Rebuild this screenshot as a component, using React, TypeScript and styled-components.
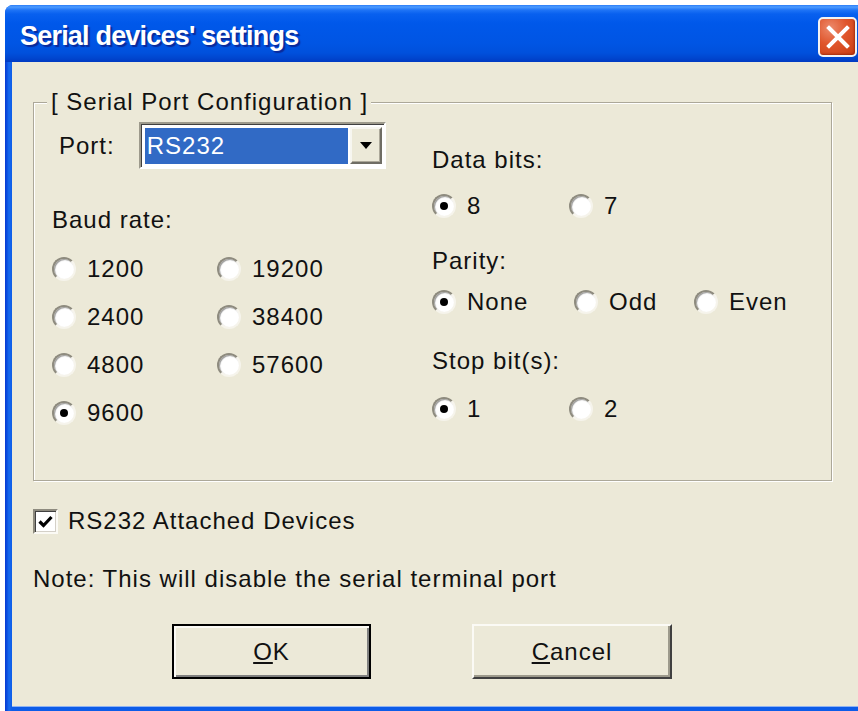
import React from 'react';
import styled, { createGlobalStyle } from 'styled-components';

const GlobalStyle = createGlobalStyle`
  html, body {
    margin: 0;
    padding: 0;
    background: #fff;
    overflow: hidden;
  }
  body {
    font-family: "Liberation Sans", Arial, sans-serif;
  }
`;

const Window = styled.div`
  margin: 5px 0 0 5px;
  width: 862px;
  height: 706px;
  display: flex;
  flex-direction: column;
  border-radius: 8px 8px 0 0;
  overflow: hidden;
  background: linear-gradient(to right, #0839d0 0, #0a4fe0 2px, #166aee 4px, #0d5ce8 7px);
`;

const TitleBar = styled.div`
  flex: none;
  height: 57px;
  display: flex;
  align-items: flex-start;
  justify-content: space-between;
  padding: 0 10px 0 15px;
  background: linear-gradient(
    to bottom,
    #2a7cf7 0,
    #4d9bff 2px,
    #1f74f6 5px,
    #0860ef 9px,
    #0058ea 18px,
    #0055e4 38px,
    #0050dc 48px,
    #0046cf 53px,
    #003ac2 57px
  );
`;

const Caption = styled.span`
  margin-top: 16px;
  color: #fff;
  font-family: "Liberation Sans", Arial, sans-serif;
  font-weight: bold;
  font-size: 27px;
  letter-spacing: -0.8px;
  line-height: 30px;
  text-shadow: 2px 2px 1px #0a2a9a;
`;

const CloseButton = styled.button`
  margin-top: 12px;
  width: 39px;
  height: 40px;
  padding: 0;
  display: flex;
  align-items: center;
  justify-content: center;
  border: 2px solid #f3f3f3;
  border-radius: 5px;
  background: radial-gradient(circle at 30% 25%, #ec8a6c 0, #e0562c 45%, #c93d12 100%);
  box-shadow: inset -1px -1px 2px rgba(120, 20, 0, 0.5);
`;

const Body = styled.div`
  flex: 1;
  margin: 0 7px 5px 7px;
  padding: 27px 0 0 21px;
  background: #ece9d8;
  box-shadow: 0 1px 0 #8fb3f2;
  color: #111;
  font-size: 24px;
  letter-spacing: 1px;
`;

const GroupBox = styled.fieldset`
  width: 799px;
  box-sizing: border-box;
  margin: 0;
  padding: 0 0 54px 0;
  border: 1px solid #aca899;
  box-shadow: inset 1px 1px 0 #fff, 1px 1px 0 #fff;
`;

const GroupTitle = styled.legend`
  margin-left: 13px;
  padding: 0 3px 0 4px;
  line-height: 26px;
  background: #ece9d8;
`;

const Columns = styled.div`
  display: flex;
  padding-left: 18px;
`;

const Column = styled.div<{ $width?: number }>`
  display: flex;
  flex-direction: column;
  width: ${p => (p.$width ? `${p.$width}px` : 'auto')};
`;

const PortRow = styled.div`
  margin: 7px 0 0 7px;
  height: 47px;
  display: flex;
  align-items: center;
  gap: 24px;
`;

const Combo = styled.div`
  width: 247px;
  height: 47px;
  box-sizing: border-box;
  display: flex;
  padding: 3px 2px 3px 4px;
  border: 2px solid;
  border-color: #9d9a8c #fff #fff #9d9a8c;
  box-shadow: inset 1px 1px 0 #404040;
  background: #fff;
`;

const ComboValue = styled.div`
  flex: 1;
  margin: 1px 2px 0 0;
  padding-left: 2px;
  display: flex;
  align-items: center;
  background: #316ac5;
  color: #fff;
`;

const ComboArrow = styled.div`
  width: 32px;
  box-sizing: border-box;
  display: flex;
  align-items: center;
  justify-content: center;
  border: 2px solid;
  border-color: #f7f6f0 #6f6d64 #6f6d64 #f7f6f0;
  box-shadow: inset -1px -1px 0 #aca899;
  background: #ece9d8;
`;

const Label = styled.div<{ $top: number }>`
  margin-top: ${p => p.$top}px;
  line-height: 26px;
`;

const RadioGrid = styled.div`
  margin-top: 23px;
  display: grid;
  grid-template-columns: 165px 165px;
  grid-auto-rows: 26px;
  row-gap: 22px;
`;

const OptionRow = styled.div<{ $top: number }>`
  margin-top: ${p => p.$top}px;
  display: flex;
  height: 26px;
`;

const Option = styled.label<{ $width?: number }>`
  display: flex;
  align-items: center;
  gap: 11px;
  width: ${p => (p.$width ? `${p.$width}px` : 'auto')};
  line-height: 26px;
`;

const RadioDot = styled.span<{ $on?: boolean }>`
  position: relative;
  flex: none;
  width: 24px;
  height: 24px;
  box-sizing: border-box;
  border-radius: 50%;
  background: #fff;
  border: 2px solid;
  border-color: #8e8b7f #f6f4ec #f6f4ec #8e8b7f;
  box-shadow: inset 1px 1px 1px rgba(0, 0, 0, 0.4);

  &::after {
    content: '';
    display: ${p => (p.$on ? 'block' : 'none')};
    position: absolute;
    left: 50%;
    top: 50%;
    width: 8px;
    height: 8px;
    margin: -4px 0 0 -4px;
    border-radius: 50%;
    background: #000;
  }
`;

const CheckRow = styled.label`
  margin-top: 26px;
  height: 28px;
  display: flex;
  align-items: center;
  gap: 10px;
`;

const CheckBox = styled.span`
  flex: none;
  width: 25px;
  height: 25px;
  box-sizing: border-box;
  display: flex;
  align-items: center;
  justify-content: center;
  border: 2px solid;
  border-color: #8e8b7f #fbfaf5 #fbfaf5 #8e8b7f;
  box-shadow: inset 1px 1px 0 #404040, inset -1px -1px 0 #d4d0c8;
  background: #fff;
`;

const Note = styled.div`
  margin-top: 31px;
  line-height: 26px;
`;

const ButtonRow = styled.div`
  margin-top: 32px;
  padding-left: 139px;
  display: flex;
  gap: 101px;
`;

const PushButton = styled.button<{ $default?: boolean }>`
  width: 200px;
  height: 55px;
  padding: 0;
  font: inherit;
  letter-spacing: 1px;
  color: #111;
  background: #ece9d8;
  border: 2px solid;
  border-color: ${p => (p.$default ? '#000' : '#fbfaf5 #404040 #404040 #fbfaf5')};
  box-shadow: ${p =>
    p.$default
      ? 'inset 2px 2px 0 #fbfaf5, inset -2px -2px 0 #808080'
      : 'inset -2px -2px 0 #9d9a8c'};
`;

const baudRates = [
  ['1200', '19200'],
  ['2400', '38400'],
  ['4800', '57600'],
  ['9600'],
];

const Radio = ({ label, on, width }: { label: string; on?: boolean; width?: number }) => (
  <Option $width={width}>
    <RadioDot $on={on} />
    {label}
  </Option>
);

export default function App() {
  return (
    <>
      <GlobalStyle />
      <Window>
        <TitleBar>
          <Caption>Serial devices' settings</Caption>
          <CloseButton aria-label="Close">
            <svg width="24" height="24" viewBox="0 0 24 24">
              <path d="M3 3L21 21M21 3L3 21" stroke="#fff" strokeWidth="4" strokeLinecap="square" />
            </svg>
          </CloseButton>
        </TitleBar>
        <Body>
          <GroupBox>
            <GroupTitle>[ Serial Port Configuration ]</GroupTitle>
            <Columns>
              <Column $width={380}>
                <PortRow>
                  <span>Port:</span>
                  <Combo>
                    <ComboValue>RS232</ComboValue>
                    <ComboArrow>
                      <svg width="12" height="7" viewBox="0 0 12 7">
                        <path d="M0 0H12L6 7Z" fill="#000" />
                      </svg>
                    </ComboArrow>
                  </Combo>
                </PortRow>
                <Label $top={38}>Baud rate:</Label>
                <RadioGrid>
                  {baudRates.flat().map(rate => (
                    <Radio key={rate} label={rate} on={rate === '9600'} />
                  ))}
                </RadioGrid>
              </Column>
              <Column>
                <Label $top={32}>Data bits:</Label>
                <OptionRow $top={20}>
                  <Radio label="8" on width={137} />
                  <Radio label="7" />
                </OptionRow>
                <Label $top={29}>Parity:</Label>
                <OptionRow $top={15}>
                  <Radio label="None" on width={142} />
                  <Radio label="Odd" width={120} />
                  <Radio label="Even" />
                </OptionRow>
                <Label $top={33}>Stop bit(s):</Label>
                <OptionRow $top={22}>
                  <Radio label="1" on width={137} />
                  <Radio label="2" />
                </OptionRow>
              </Column>
            </Columns>
          </GroupBox>
          <CheckRow>
            <CheckBox>
              <svg width="15" height="13" viewBox="0 0 15 13">
                <path d="M1.5 6.5L5.5 10.5L13.5 2" stroke="#000" strokeWidth="3.2" fill="none" />
              </svg>
            </CheckBox>
            RS232 Attached Devices
          </CheckRow>
          <Note>Note: This will disable the serial terminal port</Note>
          <ButtonRow>
            <PushButton $default style={{ width: 199 }}>
              <u>O</u>K
            </PushButton>
            <PushButton>
              <u>C</u>ancel
            </PushButton>
          </ButtonRow>
        </Body>
      </Window>
    </>
  );
}
